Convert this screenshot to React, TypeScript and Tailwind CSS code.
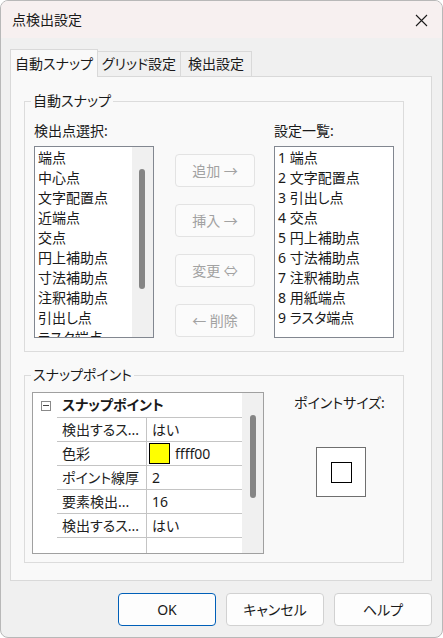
import React from "react";

const leftItems = [
  "端点",
  "中心点",
  "文字配置点",
  "近端点",
  "交点",
  "円上補助点",
  "寸法補助点",
  "注釈補助点",
  "引出し点",
  "ラスタ端点",
];

const rightItems = [
  "1 端点",
  "2 文字配置点",
  "3 引出し点",
  "4 交点",
  "5 円上補助点",
  "6 寸法補助点",
  "7 注釈補助点",
  "8 用紙端点",
  "9 ラスタ端点",
];

type Prop = { name: string; value: string; color?: string };

const props: Prop[] = [
  { name: "検出するス...", value: "はい" },
  { name: "色彩", value: "ffff00", color: "#ffff00" },
  { name: "ポイント線厚", value: "2" },
  { name: "要素検出...", value: "16" },
  { name: "検出するス...", value: "はい" },
];

function TitleBar(): React.ReactElement {
  return (
    <div className="flex h-[37px] shrink-0 items-center justify-between bg-[#f7f0f0] pl-[11px] pr-[14px]">
      <span className="leading-[20px]">点検出設定</span>
      <svg width="13" height="13" viewBox="0 0 13 13" className="mt-px">
        <path d="M1 1 L12 12 M12 1 L1 12" stroke="#1b1b1b" strokeWidth="1.1" fill="none" />
      </svg>
    </div>
  );
}

function Tabs(): React.ReactElement {
  return (
    <div className="flex h-[27px] items-end whitespace-nowrap">
      <div className="relative z-10 -mb-px flex h-[28px] w-[88px] items-center justify-center border border-b-0 border-[#d9d9d9] bg-[#f9f9f9] leading-[20px]">
        自動スナップ
      </div>
      <div className="-ml-px flex h-[25px] w-[84px] items-center justify-center border border-b-0 border-[#d9d9d9] bg-[#f0f0f0] leading-[20px]">
        グリッド設定
      </div>
      <div className="-ml-px flex h-[25px] w-[72px] items-center justify-center border border-b-0 border-[#d9d9d9] bg-[#f0f0f0] leading-[20px]">
        検出設定
      </div>
    </div>
  );
}

function ListBox({ items, scroll }: { items: string[]; scroll?: boolean }): React.ReactElement {
  return (
    <div className="flex h-[192px] w-[120px] overflow-hidden border border-[#828790] bg-white">
      <div className="flex-1 overflow-hidden pl-[3px] pt-px">
        {items.map((item) => (
          <div key={item} className="h-[20px] whitespace-nowrap leading-[20px]">
            {item}
          </div>
        ))}
      </div>
      {scroll && (
        <div className="flex w-[21px] flex-col items-center bg-[#f0f0f0] pt-[22px]">
          <div className="ml-[-1px] h-[120px] w-[6px] rounded-full bg-[#858585]" />
        </div>
      )}
    </div>
  );
}

function ActionButton({ label }: { label: string }): React.ReactElement {
  return (
    <div className="flex h-[33px] w-[80px] items-center justify-center rounded-[4px] border border-[#e3e3e3] bg-[#fbfbfb] leading-[20px] text-[#a2a2a2]">
      {label}
    </div>
  );
}

function AutoSnapGroup(): React.ReactElement {
  return (
    <fieldset className="border border-[#dcdcdc] px-[9px] pb-[13px]">
      <legend className="-ml-[3px] px-[2px] leading-[18px]">自動スナップ</legend>
      <div className="mt-[11px] flex">
        <div className="flex flex-col">
          <div className="mb-[5px] leading-[20px]">検出点選択:</div>
          <ListBox items={leftItems} scroll />
        </div>
        <div className="ml-[21px] flex flex-col gap-[17px] pt-[33px]">
          <ActionButton label="追加 →" />
          <ActionButton label="挿入 →" />
          <ActionButton label="変更 ⇔" />
          <ActionButton label="← 削除" />
        </div>
        <div className="ml-[19px] flex flex-col">
          <div className="mb-[5px] leading-[20px]">設定一覧:</div>
          <ListBox items={rightItems} />
        </div>
      </div>
    </fieldset>
  );
}

function PropertyGrid(): React.ReactElement {
  return (
    <div className="flex h-[162px] w-[232px] overflow-hidden border border-[#a0a0a0] bg-white">
      <div className="flex flex-1 flex-col">
        <div className="flex h-[25px] shrink-0">
          <div className="flex w-[24px] items-center pl-[8px]">
            <div className="flex h-[10px] w-[10px] items-center justify-center border border-[#8a8a8a]">
              <div className="h-px w-[6px] bg-[#444]" />
            </div>
          </div>
          <div className="flex-1 border-b border-[#c4c4c4] pl-[5px] font-bold leading-[24px]">
            スナップポイント
          </div>
        </div>
        {props.map((p, i) => (
          <div key={i} className="flex h-[24px] shrink-0">
            <div className="w-[24px]" />
            <div className="flex flex-1 border-b border-[#c4c4c4]">
              <div className="w-[89px] whitespace-nowrap pl-[5px] leading-[23px] text-[#222]">{p.name}</div>
              <div className="flex flex-1 items-center border-l border-[#c4c4c4]">
                {p.color ? (
                  <>
                    <div className="ml-[2px] h-[21px] w-[21px] border border-black bg-[#ffff00]" />
                    <span className="ml-[5px] leading-[23px]">{p.value}</span>
                  </>
                ) : (
                  <span className="pl-[5px] leading-[23px]">{p.value}</span>
                )}
              </div>
            </div>
          </div>
        ))}
        <div className="flex flex-1">
          <div className="w-[24px]" />
          <div className="w-[89px]" />
          <div className="flex-1 border-l border-[#c4c4c4]" />
        </div>
      </div>
      <div className="flex w-[21px] flex-col items-center bg-[#f0f0f0] pt-[22px]">
        <div className="h-[83px] w-[6px] rounded-full bg-[#858585]" />
      </div>
    </div>
  );
}

function SnapPointGroup(): React.ReactElement {
  return (
    <fieldset className="mt-[14px] border border-[#dcdcdc] pb-[8px] pl-[7px]">
      <legend className="-ml-px px-[2px] leading-[18px]">スナップポイント</legend>
      <div className="mt-[8px] flex">
        <PropertyGrid />
        <div className="flex flex-1 flex-col">
          <div className="ml-[30px] mt-[2px] leading-[18px]">ポイントサイズ:</div>
          <div className="ml-[52px] mt-[35px] flex h-[50px] w-[50px] items-center justify-center border border-[#6f6f6f] bg-white">
            <div className="h-[21px] w-[21px] border border-black" />
          </div>
        </div>
      </div>
    </fieldset>
  );
}

function Footer(): React.ReactElement {
  return (
    <div className="mt-[12px] flex justify-end gap-[10px]">
      <button className="h-[33px] w-[98px] rounded-[4px] border border-[#005fb8] bg-[#fdfdfd] leading-[20px]">
        OK
      </button>
      <button className="h-[33px] w-[98px] rounded-[4px] border border-[#d1d1d1] bg-[#fdfdfd] leading-[20px]">
        キャンセル
      </button>
      <button className="h-[33px] w-[98px] rounded-[4px] border border-[#d1d1d1] bg-[#fdfdfd] leading-[20px]">
        ヘルプ
      </button>
    </div>
  );
}

export default function App(): React.ReactElement {
  return (
    <div className="h-[638px] w-[443px] bg-white">
      <div className="flex h-full w-full flex-col overflow-hidden rounded-[8px] border border-[#b8b8b8] bg-[#f0f0f0] font-['Noto_Sans','Noto_Sans_CJK_JP',sans-serif] text-[14px] text-[#1a1a1a] [font-feature-settings:'palt']">
        <TitleBar />
        <div className="flex flex-1 flex-col pl-[9px] pr-[10px] pt-[11px]">
          <Tabs />
          <div className="h-[505px] border border-[#d9d9d9] bg-[#f9f9f9] pl-[13px] pr-[27px] pt-[15px]">
            <AutoSnapGroup />
            <SnapPointGroup />
          </div>
          <Footer />
        </div>
      </div>
    </div>
  );
}
